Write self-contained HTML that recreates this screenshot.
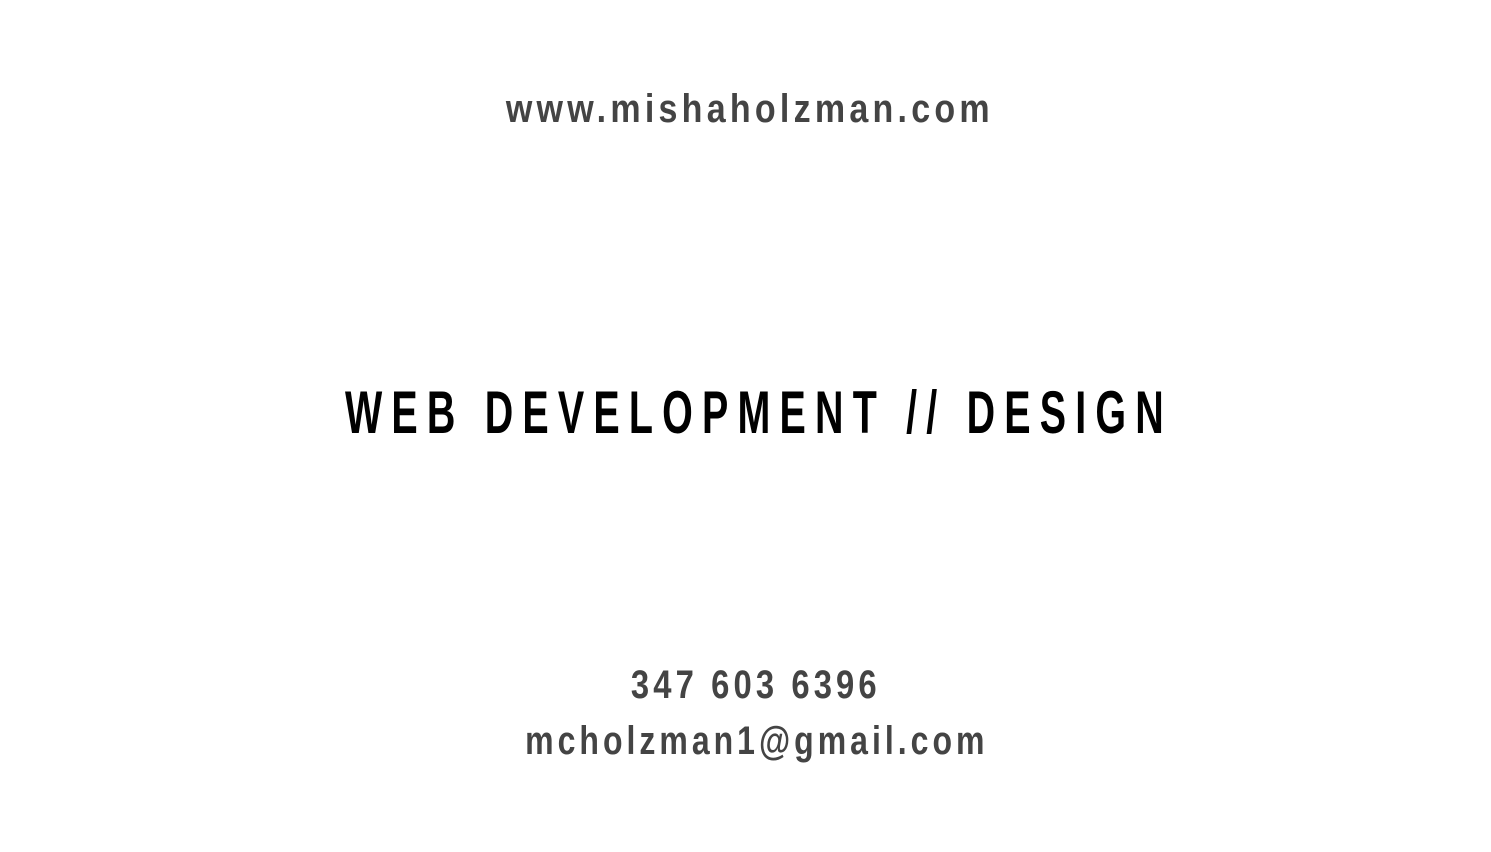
<!DOCTYPE html>
<html><head><meta charset="utf-8"><style>
html,body{margin:0;padding:0;background:#fff;width:1491px;height:852px;overflow:hidden}
.t{position:absolute;left:0;width:1510px;text-align:center;font-family:"Liberation Sans",sans-serif;font-weight:bold;white-space:nowrap}
#u{top:87px;font-size:40px;letter-spacing:5px;color:#444;transform-origin:754px 0;transform:translateX(-5px) scaleX(0.85)}
#h{top:378px;font-size:60px;letter-spacing:14px;color:#000;transform-origin:752px 0;transform:translateX(5px) scaleX(0.657)}
#p{top:663px;font-size:40px;letter-spacing:5px;color:#444;transform-origin:754px 0;transform:translateX(1px) scaleX(0.82)}
#e{top:719px;font-size:40px;letter-spacing:5px;color:#444;transform-origin:754px 0;transform:translateX(2px) scaleX(0.80)}
</style></head><body>
<div class="t" id="u">www.mishaholzman.com</div>
<div class="t" id="h">WEB DEVELOPMENT // DESIGN</div>
<div class="t" id="p">347 603 6396</div>
<div class="t" id="e">mcholzman1@gmail.com</div>
</body></html>
